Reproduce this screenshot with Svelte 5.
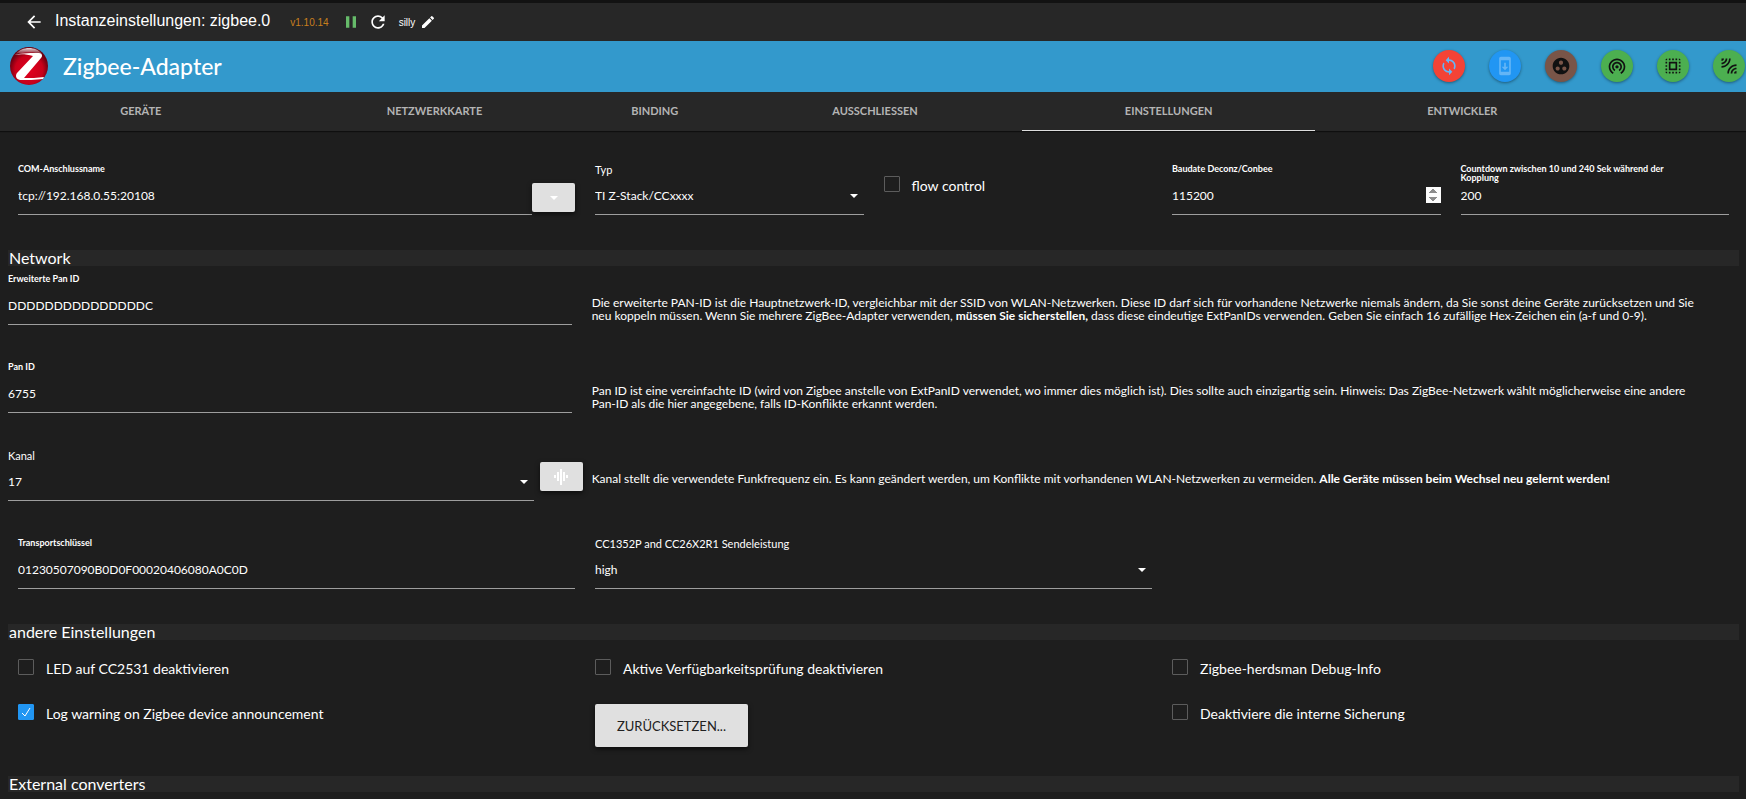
<script lang="ts">
    type Action = {
        title: string;
        color: string;
        icon: string;
        fill: string;
    };

    const tabs = [
        { label: "Geräte", span: 2 },
        { label: "Netzwerkkarte", span: 2 },
        { label: "Binding", span: 1 },
        { label: "Ausschliessen", span: 2 },
        { label: "Einstellungen", span: 2 },
        { label: "Entwickler", span: 2 }
    ];

    const actions: Action[] = [
        {
            title: "Neu verbinden",
            color: "#f44336",
            fill: "#64b5f6",
            icon: "M12 4V1L8 5l4 4V6c3.31 0 6 2.69 6 6 0 1.01-.25 1.97-.7 2.8l1.46 1.46C19.54 15.03 20 13.57 20 12c0-4.42-3.58-8-8-8zm0 14c-3.31 0-6-2.69-6-6 0-1.01.25-1.97.7-2.8L5.24 7.74C4.46 8.97 4 10.43 4 12c0 4.42 3.58 8 8 8v3l4-4-4-4v3z"
        },
        {
            title: "Updates",
            color: "#2196f3",
            fill: "#64b5f6",
            icon: "M17 1.01L7 1c-1.1 0-2 .9-2 2v18c0 1.1.9 2 2 2h10c1.1 0 2-.9 2-2V3c0-1.1-.9-1.99-2-1.99zM17 19H7V5h10v14zm-1-6h-3V8h-2v5H8l4 4 4-4z"
        },
        {
            title: "Gruppe",
            color: "#795548",
            fill: "#111111",
            icon: "M12 2C6.48 2 2 6.48 2 12s4.48 10 10 10 10-4.48 10-10S17.52 2 12 2zM8 17.5c-1.38 0-2.5-1.12-2.5-2.5s1.12-2.5 2.5-2.5 2.5 1.12 2.5 2.5-1.12 2.5-2.5 2.5zM9.5 8c0-1.38 1.12-2.5 2.5-2.5s2.5 1.12 2.5 2.5-1.12 2.5-2.5 2.5S9.5 9.38 9.5 8zm6.5 9.5c-1.38 0-2.5-1.12-2.5-2.5s1.12-2.5 2.5-2.5 2.5 1.12 2.5 2.5-1.12 2.5-2.5 2.5z"
        },
        {
            title: "Touchlink",
            color: "#4caf50",
            fill: "#111111",
            icon: "M12 11c-1.1 0-2 .9-2 2s.9 2 2 2 2-.9 2-2-.9-2-2-2zm6 2c0-3.31-2.69-6-6-6s-6 2.69-6 6c0 2.22 1.21 4.15 3 5.19l1-1.74c-1.19-.7-2-1.97-2-3.45 0-2.21 1.79-4 4-4s4 1.79 4 4c0 1.48-.81 2.75-2 3.45l1 1.74c1.79-1.04 3-2.97 3-5.19zM12 3C6.48 3 2 7.48 2 13c0 3.7 2.01 6.92 4.99 8.65l1-1.73C5.61 18.53 4 15.96 4 13c0-4.42 3.58-8 8-8s8 3.58 8 8c0 2.96-1.61 5.53-4 6.92l1 1.73c2.99-1.73 5-4.95 5-8.65 0-5.52-4.48-10-10-10z"
        },
        {
            title: "Pairing Code",
            color: "#4caf50",
            fill: "#111111",
            icon: "M3 5h2V3c-1.1 0-2 .9-2 2zm0 8h2v-2H3v2zm4 8h2v-2H7v2zM3 9h2V7H3v2zm10-6h-2v2h2V3zm6 0v2h2c0-1.1-.9-2-2-2zM5 21v-2H3c0 1.1.9 2 2 2zm-2-4h2v-2H3v2zM9 3H7v2h2V3zm2 18h2v-2h-2v2zm8-8h2v-2h-2v2zm0 8c1.1 0 2-.9 2-2h-2v2zm0-12h2V7h-2v2zm0 8h2v-2h-2v2zm-4 4h2v-2h-2v2zm0-16h2V3h-2v2zM7 17h10V7H7v10zm2-8h6v6H9V9z"
        },
        {
            title: "Anlernen",
            color: "#4caf50",
            fill: "#111111",
            icon: "M6 3H3v3c1.66 0 3-1.34 3-3zm8 0h-2c0 4.97-4.03 9-9 9v2c6.08 0 11-4.93 11-11zm-4 0H8c0 2.76-2.24 5-5 5v2c3.87 0 7-3.13 7-7zm0 18h2c0-4.97 4.03-9 9-9v-2c-6.07 0-11 4.93-11 11zm8 0h3v-3c-1.66 0-3 1.34-3 3zm-4 0h2c0-2.76 2.24-5 5-5v-2c-3.87 0-7 3.13-7 7z"
        }
    ];

    const channels = Array.from({ length: 16 }, (_, i) => String(i + 11));

    let activeTab = $state("Einstellungen");

    let settings = $state({
        port: "tcp://192.168.0.55:20108",
        adapterType: "TI Z-Stack/CCxxxx",
        flowControl: false,
        baudRate: 115200,
        countdown: 200,
        extPanId: "DDDDDDDDDDDDDDDC",
        panId: "6755",
        channel: "17",
        transportKey: "01230507090B0D0F00020406080A0C0D",
        transmitPower: "high",
        disableLed: false,
        disablePing: false,
        debugHerdsman: false,
        warnOnAnnounce: true,
        disableBackup: false
    });
</script>

{#snippet caret()}
    <svg class="caret" viewBox="0 0 8 4" aria-hidden="true"><path d="M0 0h8L4 4z" /></svg>
{/snippet}

<header class="titlebar">
    <button class="plain" aria-label="Zurück">
        <svg class="icon" viewBox="0 0 24 24"><path d="M20 11H7.83l5.59-5.59L12 4l-8 8 8 8 1.41-1.41L7.83 13H20v-2z" /></svg>
    </button>
    <h1>Instanzeinstellungen: zigbee.0</h1>
    <span class="version">v1.10.14</span>
    <button class="plain pause" aria-label="Pause">
        <svg class="icon" viewBox="0 0 24 24"><path d="M6 19h4V5H6v14zm8-14v14h4V5h-4z" /></svg>
    </button>
    <button class="plain reload" aria-label="Neu starten">
        <svg class="icon" viewBox="0 0 24 24"><path d="M17.65 6.35C16.2 4.9 14.21 4 12 4c-4.42 0-7.99 3.58-7.99 8s3.57 8 7.99 8c3.73 0 6.84-2.55 7.73-6h-2.08c-.82 2.33-3.04 4-5.65 4-3.31 0-6-2.69-6-6s2.69-6 6-6c1.66 0 3.14.69 4.22 1.78L13 11h7V4l-2.35 2.35z" /></svg>
    </button>
    <span class="loglevel">silly</span>
    <button class="plain" aria-label="Loglevel ändern">
        <svg class="icon small" viewBox="0 0 24 24"><path d="M3 17.25V21h3.75L17.81 9.94l-3.75-3.75L3 17.25zM20.71 7.04a1 1 0 0 0 0-1.41l-2.34-2.34a1 1 0 0 0-1.41 0l-1.83 1.83 3.75 3.75 1.83-1.83z" /></svg>
    </button>
</header>

<div class="brand">
    <svg class="logo" viewBox="0 0 38 38" aria-hidden="true">
        <defs>
            <radialGradient id="ball" cx="50%" cy="60%" r="52%">
                <stop offset="0" stop-color="#e2001f" />
                <stop offset="0.7" stop-color="#c8001a" />
                <stop offset="1" stop-color="#6d0011" />
            </radialGradient>
            <linearGradient id="gloss" x1="0" y1="0" x2="0" y2="1">
                <stop offset="0" stop-color="#fff" stop-opacity="0.85" />
                <stop offset="1" stop-color="#fff" stop-opacity="0.1" />
            </linearGradient>
        </defs>
        <circle cx="19" cy="19" r="19" fill="url(#ball)" />
        <path d="M6 7C9 3 14 1 19 1s10 2 13 6c-7-2-18-2-26 0z" fill="url(#gloss)" />
        <path d="M4 8c8-2 18-2 25-2 3 0 4 3 2 5L14 31c6 0 14 0 20-1l-1 2c-8 1-16 1-23 1-4-1-5-4-3-7L23 9C16 7 10 7 4 8z" fill="#fff" />
    </svg>
    <h2>Zigbee-Adapter</h2>
    <div class="actions">
        {#each actions as action}
            <button class="fab" title={action.title} aria-label={action.title} style:background={action.color}>
                <svg class="icon" viewBox="0 0 24 24" style:fill={action.fill}><path d={action.icon} /></svg>
            </button>
        {/each}
    </div>
</div>

<nav class="tabs">
    {#each tabs as tab}
        <button
            class="tab"
            class:wide={tab.span === 2}
            class:active={activeTab === tab.label}
            onclick={() => (activeTab = tab.label)}
        >
            {tab.label}
        </button>
    {/each}
</nav>

<main>
    <div class="row inset">
        <div class="s4 joined">
            <div class="field">
                <label for="port">COM-Anschlussname</label>
                <input id="port" type="text" bind:value={settings.port} />
            </div>
            <button class="btn" aria-label="Anschluss wählen">{@render caret()}</button>
        </div>
        <div class="s2 field">
            <label class="big" for="adapterType">Typ</label>
            <div class="select">
                <select id="adapterType" bind:value={settings.adapterType}>
                    <option>TI Z-Stack/CCxxxx</option>
                    <option>Deconz/Conbee</option>
                </select>
                {@render caret()}
            </div>
        </div>
        <label class="s2 check flow">
            <input type="checkbox" bind:checked={settings.flowControl} />
            <span>flow control</span>
        </label>
        <div class="s2 field">
            <label for="baudRate">Baudate Deconz/Conbee</label>
            <input id="baudRate" class="spin" type="number" bind:value={settings.baudRate} />
        </div>
        <div class="s2 field">
            <label for="countdown">Countdown zwischen 10 und 240 Sek während der Kopplung</label>
            <input id="countdown" type="number" min="10" max="240" bind:value={settings.countdown} />
        </div>
    </div>

    <h3>Network</h3>
    <div class="network">
        <div class="row">
            <div class="s4 field">
                <label for="extPanId">Erweiterte Pan ID</label>
                <input id="extPanId" type="text" bind:value={settings.extPanId} />
            </div>
            <p class="s8">
                Die erweiterte PAN-ID ist die Hauptnetzwerk-ID, vergleichbar mit der SSID von WLAN-Netzwerken. Diese ID darf
                sich für vorhandene Netzwerke niemals ändern, da Sie sonst deine Geräte zurücksetzen und Sie neu koppeln
                müssen. Wenn Sie mehrere ZigBee-Adapter verwenden, <b>müssen Sie sicherstellen,</b> dass diese eindeutige
                ExtPanIDs verwenden. Geben Sie einfach 16 zufällige Hex-Zeichen ein (a-f und 0-9).
            </p>
        </div>
        <div class="row">
            <div class="s4 field">
                <label for="panId">Pan ID</label>
                <input id="panId" type="text" bind:value={settings.panId} />
            </div>
            <p class="s8">
                Pan ID ist eine vereinfachte ID (wird von Zigbee anstelle von ExtPanID verwendet, wo immer dies möglich ist).
                Dies sollte auch einzigartig sein. Hinweis: Das ZigBee-Netzwerk wählt möglicherweise eine andere Pan-ID als
                die hier angegebene, falls ID-Konflikte erkannt werden.
            </p>
        </div>
        <div class="row">
            <div class="s4 joined channel">
                <div class="field">
                    <label class="big" for="channel">Kanal</label>
                    <div class="select">
                        <select id="channel" bind:value={settings.channel}>
                            {#each channels as channel}
                                <option>{channel}</option>
                            {/each}
                        </select>
                        {@render caret()}
                    </div>
                </div>
                <button class="btn" aria-label="Kanäle scannen">
                    <svg class="wave" viewBox="0 0 14 16"><path d="M0 6h2v3H0zM3 3h2v9H3zM6 0h2v16H6zM9 3h2v9H9zM12 6h2v3h-2z" /></svg>
                </button>
            </div>
            <p class="s8">
                Kanal stellt die verwendete Funkfrequenz ein. Es kann geändert werden, um Konflikte mit vorhandenen
                WLAN-Netzwerken zu vermeiden. <b>Alle Geräte müssen beim Wechsel neu gelernt werden!</b>
            </p>
        </div>
        <div class="row inset">
            <div class="s4 field">
                <label for="transportKey">Transportschlüssel</label>
                <input id="transportKey" type="text" bind:value={settings.transportKey} />
            </div>
            <div class="s4 field">
                <label class="big" for="transmitPower">CC1352P and CC26X2R1 Sendeleistung</label>
                <div class="select">
                    <select id="transmitPower" bind:value={settings.transmitPower}>
                        <option>high</option>
                        <option>normal</option>
                        <option>low</option>
                    </select>
                    {@render caret()}
                </div>
            </div>
        </div>
    </div>

    <h3>andere Einstellungen</h3>
    <div class="row inset other">
        <label class="s4 check">
            <input type="checkbox" bind:checked={settings.disableLed} />
            <span>LED auf CC2531 deaktivieren</span>
        </label>
        <label class="s4 check">
            <input type="checkbox" bind:checked={settings.disablePing} />
            <span>Aktive Verfügbarkeitsprüfung deaktivieren</span>
        </label>
        <label class="s4 check">
            <input type="checkbox" bind:checked={settings.debugHerdsman} />
            <span>Zigbee-herdsman Debug-Info</span>
        </label>
        <label class="s4 check">
            <input type="checkbox" bind:checked={settings.warnOnAnnounce} />
            <span>Log warning on Zigbee device announcement</span>
        </label>
        <div class="s4">
            <button class="btn reset">Zurücksetzen...</button>
        </div>
        <label class="s4 check">
            <input type="checkbox" bind:checked={settings.disableBackup} />
            <span>Deaktiviere die interne Sicherung</span>
        </label>
    </div>

    <h3>External converters</h3>
</main>

<style>
    :global(body) {
        background: #1e1e1e;
        color: #fff;
        font-family: Lato, "Open Sans", sans-serif;
        overflow-x: hidden;
    }
    h1, h2, h3, p {
        margin: 0;
        font-weight: 400;
    }
    button, input, select {
        font-family: inherit;
        color: inherit;
        box-sizing: border-box;
    }
    button {
        padding: 0;
        border: none;
        cursor: pointer;
    }
    .icon {
        display: block;
        width: 20px;
        height: 20px;
        fill: currentColor;
    }
    .icon.small {
        width: 16px;
        height: 16px;
    }
    .plain {
        background: none;
    }

    /* title bar */
    .titlebar {
        display: flex;
        align-items: center;
        height: 38px;
        padding: 0 24px;
        border-top: 3px solid #121212;
        background: #272727;
        font-family: "Liberation Sans", Arial, sans-serif;
    }
    .titlebar h1 {
        margin: 0 20px 2px 11px;
        font-size: 16px;
        line-height: 20px;
    }
    .version {
        margin-right: 12px;
        font-size: 10px;
        color: #c77f1d;
    }
    .pause {
        color: #66bb6a;
    }
    .reload {
        margin: 0 11px 0 7px;
    }
    .loglevel {
        margin-right: 5px;
        font-size: 10px;
    }

    /* adapter bar */
    .brand {
        display: flex;
        align-items: center;
        height: 50px;
        padding: 0 1px 1px 10px;
        background: #3399cc;
    }
    .logo {
        width: 38px;
        height: 38px;
    }
    .brand h2 {
        margin-left: 15px;
        font-size: 23px;
        font-weight: 500;
        line-height: 26px;
    }
    .actions {
        display: flex;
        gap: 24px;
        margin-left: auto;
    }
    .fab {
        display: flex;
        align-items: center;
        justify-content: center;
        width: 32px;
        height: 32px;
        border-radius: 50%;
        box-shadow: 0 1px 3px rgba(0, 0, 0, 0.4);
    }

    /* tabs */
    .tabs {
        display: grid;
        grid-template-columns: repeat(12, 1fr);
        height: 39px;
        margin: 0 -10px 0 -6px;
        background: #272727;
        box-shadow: 0 1px 1px rgba(0, 0, 0, 0.5);
    }
    .tab {
        padding-bottom: 2px;
        border-bottom: 1px solid transparent;
        background: none;
        color: #b4b4b4;
        font-size: 11px;
        font-weight: 700;
        text-transform: uppercase;
    }
    .tab.wide {
        grid-column: span 2;
    }
    .tab.active {
        border-color: #ddd;
    }

    /* settings form */
    main {
        padding: 33px 7px 6px 8px;
    }
    .row {
        display: grid;
        grid-template-columns: repeat(12, 1fr);
        column-gap: 20px;
    }
    .inset {
        padding: 0 10px;
    }
    .s2 {
        grid-column: span 2;
    }
    .s4 {
        grid-column: span 4;
    }
    .s8 {
        grid-column: span 8;
    }
    h3 {
        margin-top: 35px;
        padding-left: 1px;
        background: #272727;
        font-size: 16px;
        line-height: 16px;
    }
    .network {
        display: flex;
        flex-direction: column;
        gap: 37px;
        margin-top: 8px;
    }
    .field {
        min-width: 0;
    }
    .field label {
        display: block;
        width: 80%;
        height: 14px;
        font-size: 9px;
        font-weight: 700;
        line-height: 9px;
    }
    .field label.big {
        font-size: 11px;
        font-weight: 400;
        line-height: 12px;
    }
    .field input, .field select {
        display: block;
        width: 100%;
        height: 37px;
        padding: 0 0 2px;
        border: none;
        border-bottom: 1px solid #9e9e9e;
        border-radius: 0;
        outline: none;
        background: transparent;
        font-size: 12px;
        appearance: none;
    }
    .field input[type="number"] {
        appearance: textfield;
    }
    .field input.spin {
        appearance: auto;
    }
    .spin::-webkit-inner-spin-button {
        height: 16px;
        opacity: 1;
    }
    .field option {
        background: #272727;
    }
    .select {
        display: grid;
        align-items: center;
    }
    .select select, .select .caret {
        grid-area: 1 / 1;
    }
    .select .caret {
        justify-self: end;
        margin: 0 6px 2px 0;
        pointer-events: none;
    }
    .caret {
        width: 8px;
        height: 4px;
        fill: #fff;
    }
    .joined {
        display: flex;
        align-items: center;
    }
    .joined .field {
        flex: 1;
    }
    .joined .btn {
        margin-top: 16px;
    }
    .channel {
        gap: 6px;
        margin-right: -11px;
    }
    .channel .btn {
        margin-top: 2px;
    }
    .btn {
        display: flex;
        align-items: center;
        justify-content: center;
        width: 43px;
        height: 29px;
        border-radius: 2px;
        background: #e0e0e0;
        box-shadow: 0 2px 5px rgba(0, 0, 0, 0.6);
    }
    .wave {
        width: 14px;
        height: 16px;
        fill: #fff;
    }
    p {
        padding: 22px 36px 0 0;
        font-size: 12px;
        line-height: 13px;
    }

    /* check boxes */
    .check {
        display: flex;
        align-items: flex-start;
        align-self: start;
        gap: 12px;
        font-size: 14px;
        line-height: 20px;
    }
    .flow {
        margin-top: 12px;
    }
    .check input {
        width: 16px;
        height: 16px;
        margin: 0;
        border: 1px solid #5c5c5c;
        border-radius: 1px;
        appearance: none;
    }
    .check input:checked {
        border-color: #2196f3;
        background: #2196f3 url("data:image/svg+xml,%3Csvg xmlns='http://www.w3.org/2000/svg' viewBox='0 0 14 14'%3E%3Cpath d='M3 8l3 3 5-8' fill='none' stroke='%23fff'/%3E%3C/svg%3E") center / 14px no-repeat;
    }
    .other {
        row-gap: 25px;
        margin-top: 19px;
    }
    .other + h3 {
        margin-top: 29px;
    }
    .reset {
        width: 153px;
        height: 43px;
        color: #212121;
        font-size: 13px;
        text-transform: uppercase;
    }
</style>
